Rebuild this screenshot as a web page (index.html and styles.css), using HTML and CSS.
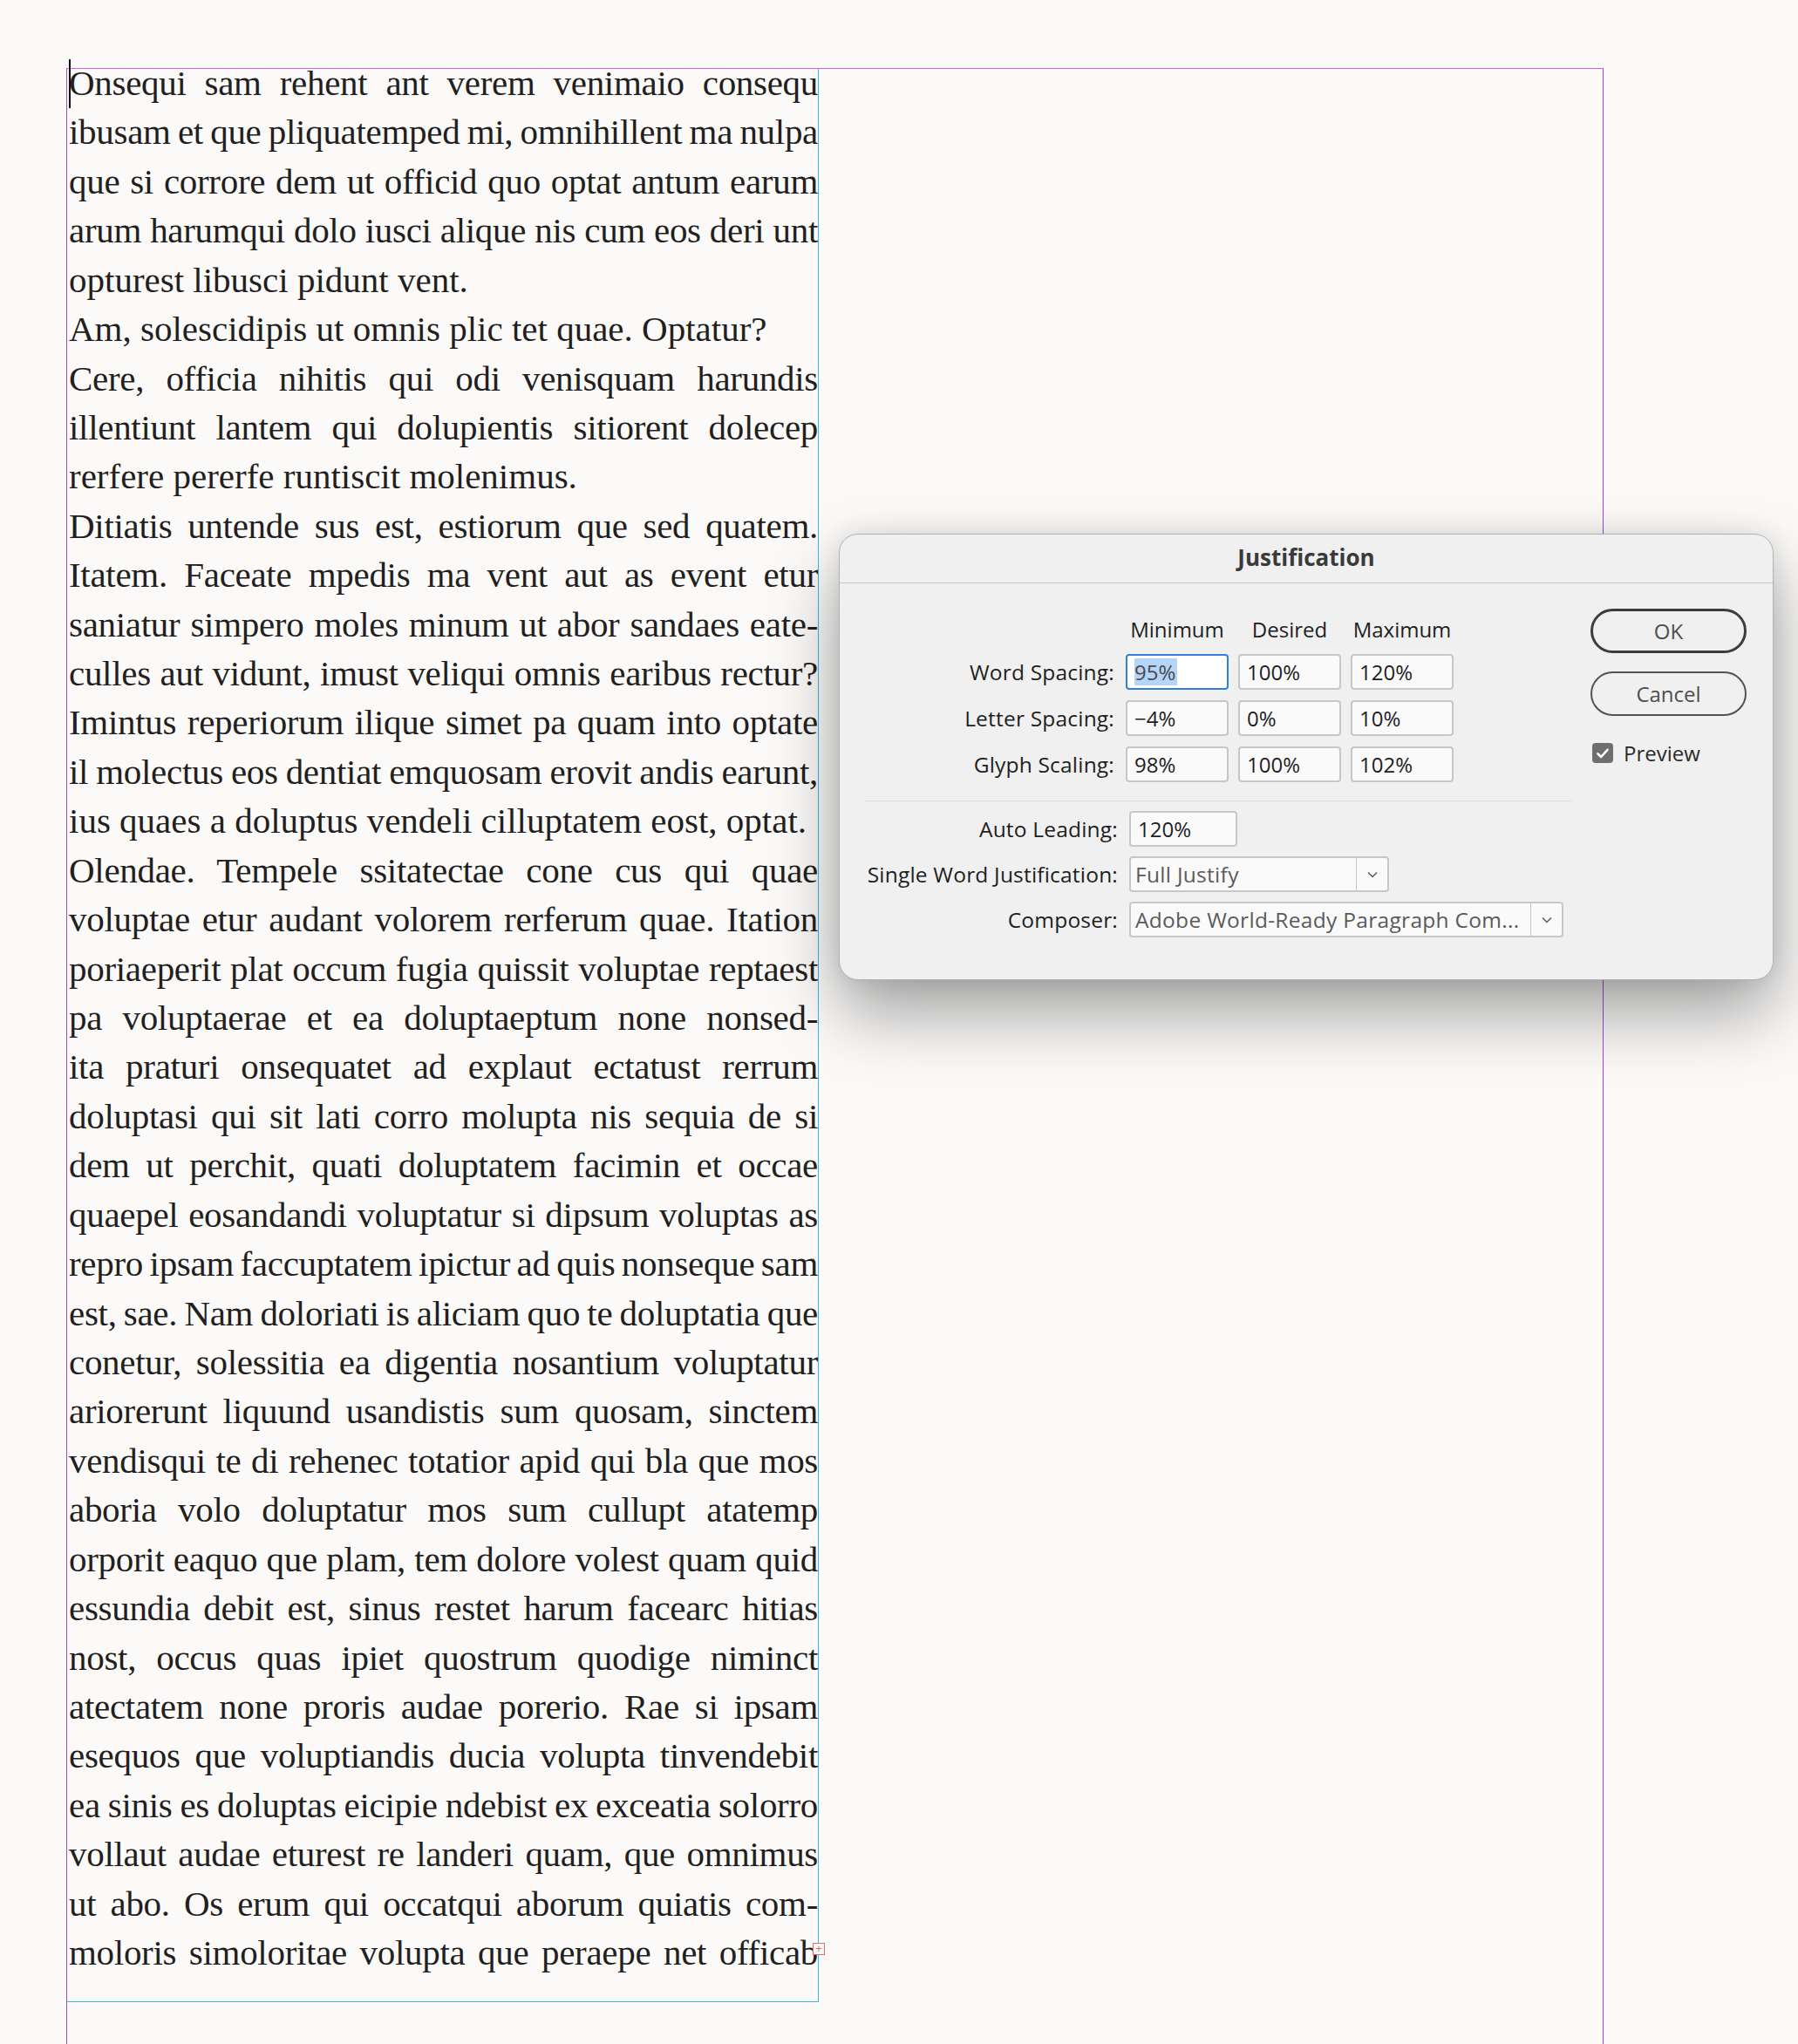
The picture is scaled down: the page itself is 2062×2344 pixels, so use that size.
FILE: index.html
```html
<!DOCTYPE html>
<html lang="en">
<head>
<meta charset="UTF-8" />
<meta name="viewport" content="width=device-width, initial-scale=1" />
<title>Justification</title>
<link rel="stylesheet" href="styles.css">
</head>
<body>
<main class="spread" aria-label="Document page">
  <div class="margins">
    <div class="text-frame">
      <span class="caret"></span>
      <div class="story">
        <div class="ln">Onsequi sam rehent ant verem venimaio consequ</div>
        <div class="ln">ibusam et que pliquatemped mi, omnihillent ma nulpa</div>
        <div class="ln">que si corrore dem ut officid quo optat antum earum</div>
        <div class="ln">arum harumqui dolo iusci alique nis cum eos deri unt</div>
        <div class="ln end">opturest libusci pidunt vent.</div>
        <div class="ln end">Am, solescidipis ut omnis plic tet quae. Optatur?</div>
        <div class="ln">Cere, officia nihitis qui odi venisquam harundis</div>
        <div class="ln">illentiunt lantem qui dolupientis sitiorent dolecep</div>
        <div class="ln end">rerfere pererfe runtiscit molenimus.</div>
        <div class="ln">Ditiatis untende sus est, estiorum que sed quatem.</div>
        <div class="ln">Itatem. Faceate mpedis ma vent aut as event etur</div>
        <div class="ln">saniatur simpero moles minum ut abor sandaes eate-</div>
        <div class="ln">culles aut vidunt, imust veliqui omnis earibus rectur?</div>
        <div class="ln">Imintus reperiorum ilique simet pa quam into optate</div>
        <div class="ln">il molectus eos dentiat emquosam erovit andis earunt,</div>
        <div class="ln end">ius quaes a doluptus vendeli cilluptatem eost, optat.</div>
        <div class="ln">Olendae. Tempele ssitatectae cone cus qui quae</div>
        <div class="ln">voluptae etur audant volorem rerferum quae. Itation</div>
        <div class="ln">poriaeperit plat occum fugia quissit voluptae reptaest</div>
        <div class="ln">pa voluptaerae et ea doluptaeptum none nonsed-</div>
        <div class="ln">ita praturi onsequatet ad explaut ectatust rerrum</div>
        <div class="ln">doluptasi qui sit lati corro molupta nis sequia de si</div>
        <div class="ln">dem ut perchit, quati doluptatem facimin et occae</div>
        <div class="ln">quaepel eosandandi voluptatur si dipsum voluptas as</div>
        <div class="ln">repro ipsam faccuptatem ipictur ad quis nonseque sam</div>
        <div class="ln">est, sae. Nam doloriati is aliciam quo te doluptatia que</div>
        <div class="ln">conetur, solessitia ea digentia nosantium voluptatur</div>
        <div class="ln">ariorerunt liquund usandistis sum quosam, sinctem</div>
        <div class="ln">vendisqui te di rehenec totatior apid qui bla que mos</div>
        <div class="ln">aboria volo doluptatur mos sum cullupt atatemp</div>
        <div class="ln">orporit eaquo que plam, tem dolore volest quam quid</div>
        <div class="ln">essundia debit est, sinus restet harum facearc hitias</div>
        <div class="ln">nost, occus quas ipiet quostrum quodige niminct</div>
        <div class="ln">atectatem none proris audae porerio. Rae si ipsam</div>
        <div class="ln">esequos que voluptiandis ducia volupta tinvendebit</div>
        <div class="ln">ea sinis es doluptas eicipie ndebist ex exceatia solorro</div>
        <div class="ln">vollaut audae eturest re landeri quam, que omnimus</div>
        <div class="ln">ut abo. Os erum qui occatqui aborum quiatis com-</div>
        <div class="ln">moloris simoloritae volupta que peraepe net officab</div>
      </div>
      <span class="overset">+</span>
    </div>
  </div>
</main>

<div class="dialog" role="dialog" aria-label="Justification">
  <div class="dialog-title">Justification</div>
  <div class="dialog-body">
    <div class="settings">
      <div class="spacing-grid">
        <span></span>
        <span class="col-head">Minimum</span>
        <span class="col-head">Desired</span>
        <span class="col-head">Maximum</span>

        <span class="lbl">Word Spacing:</span>
        <span class="field focused"><span class="sel">95%</span></span>
        <span class="field">100%</span>
        <span class="field">120%</span>

        <span class="lbl">Letter Spacing:</span>
        <span class="field">&minus;4%</span>
        <span class="field">0%</span>
        <span class="field">10%</span>

        <span class="lbl">Glyph Scaling:</span>
        <span class="field">98%</span>
        <span class="field">100%</span>
        <span class="field">102%</span>
      </div>

      <div class="rule"></div>

      <div class="options-grid">
        <span class="lbl">Auto Leading:</span>
        <span class="field leading">120%</span>

        <span class="lbl">Single Word Justification:</span>
        <span class="dropdown single">
          <span class="dd-value">Full Justify</span>
          <span class="dd-arrow"><svg width="12" height="8" viewBox="0 0 12 8"><path d="M1 1.5 L6 6.5 L11 1.5" fill="none" stroke="#555" stroke-width="1.4"/></svg></span>
        </span>

        <span class="lbl">Composer:</span>
        <span class="dropdown composer">
          <span class="dd-value">Adobe World-Ready Paragraph Com...</span>
          <span class="dd-arrow"><svg width="12" height="8" viewBox="0 0 12 8"><path d="M1 1.5 L6 6.5 L11 1.5" fill="none" stroke="#555" stroke-width="1.4"/></svg></span>
        </span>
      </div>
    </div>

    <div class="actions">
      <button class="btn btn-default">OK</button>
      <button class="btn">Cancel</button>
      <label class="check">
        <span class="box"><svg width="16" height="14" viewBox="0 0 16 14"><path d="M2.5 7.5 L6.2 11 L13.5 2.8" fill="none" stroke="#fff" stroke-width="2.6" stroke-linecap="round" stroke-linejoin="round"/></svg></span>
        Preview
      </label>
    </div>
  </div>
</div>
</body>
</html>
```

FILE: styles.css
```css
html, body {
  margin: 0;
  padding: 0;
}
body {
  width: 2062px;
  height: 2344px;
  overflow: hidden;
  background: #fbfaf9;
  position: relative;
}

/* document page with guides */
.spread {
  padding: 78px 0 0 76px;
}
.margins {
  width: 1761px;
  height: 2266px;
  border: 1px solid #a448d2;
  border-top-color: #d860e6;
  border-bottom: none;
}
.text-frame {
  display: flow-root;
  position: relative;
  width: 861px;
  height: 2216px;
  border-right: 1px solid #3cb6e2;
  border-bottom: 1px solid #3cb6e2;
}
.story {
  margin-top: -12px;
  padding-left: 2px;
  overflow: hidden;
  font-family: "Liberation Serif", "Times New Roman", serif;
  font-size: 41px;
  line-height: 56.42px;
  color: #231f20;
}
/* tight minimums, justification spreads the rest */
.ln {
  white-space: nowrap;
  text-align: justify;
  text-align-last: justify;
  letter-spacing: -0.3px;
  word-spacing: -3px;
}
.ln.end {
  text-align-last: left;
  letter-spacing: 0;
  word-spacing: 0;
}
.caret {
  position: absolute;
  left: 2px;
  top: -11px;
  width: 2px;
  height: 56px;
  background: #111;
}
.overset {
  position: absolute;
  right: -8px;
  bottom: 53px;
  width: 12px;
  height: 12px;
  border: 1px solid #e06a72;
  background: #fbfaf9;
  color: #e06a72;
  font: 13px/12px "Liberation Sans", sans-serif;
  text-align: center;
}

/* Justification dialog */
.dialog {
  position: absolute;
  left: 962px;
  top: 612px;
  width: 1072px;
  height: 512px;
  box-sizing: border-box;
  background: #f0f0f0;
  border: 1px solid #b2b2b2;
  border-radius: 22px;
  box-shadow: 0 38px 80px rgba(0,0,0,0.36), 0 0 28px rgba(0,0,0,0.09);
  font-family: "Open Sans", "Noto Sans", sans-serif;
  color: #1e1e1e;
}
.dialog-title {
  height: 55px;
  line-height: 52px;
  text-align: center;
  font-size: 26px;
  font-weight: 700;
  color: #3a3a3a;
  border-bottom: 1px solid #c9c9c9;
}
.dialog-body {
  display: flex;
  padding: 29px 30px 0 29px;
}
.settings {
  width: 832px;
  padding-top: 6px;
}
.spacing-grid {
  display: grid;
  grid-template-columns: 288px 118px 118px 118px;
  grid-template-rows: 34px 41px 41px 41px;
  column-gap: 11px;
  row-gap: 12px;
  align-items: center;
}
.col-head {
  font-size: 24px;
  text-align: center;
  color: #1e1e1e;
}
.lbl {
  font-size: 24.5px;
  letter-spacing: 0.2px;
  text-align: right;
  padding-right: 2px;
  white-space: nowrap;
}
.field {
  box-sizing: border-box;
  height: 41px;
  padding: 0 8px;
  line-height: 37px;
  font-size: 24px;
  background: #fafafa;
  border: 2px solid #c7c7c7;
  border-radius: 4px;
  color: #1e1e1e;
}
.field.focused {
  background: #fff;
  border-color: #2f7fdc;
}
.sel {
  display: inline-block;
  background: #b5d5f8;
  color: #4a4a4a;
  line-height: 31px;
  padding-right: 2px;
}
.rule {
  width: 811px;
  height: 1px;
  background: #dddddd;
  margin: 21px 0 11px;
}
.options-grid {
  display: grid;
  grid-template-columns: 303px auto;
  grid-auto-rows: 41px;
  row-gap: 11px;
  align-items: center;
  justify-items: start;
}
.options-grid .lbl {
  justify-self: stretch;
  padding-right: 13px;
}
.field.leading {
  width: 124px;
}
.dropdown {
  box-sizing: border-box;
  display: flex;
  height: 41px;
  background: #fafafa;
  border: 2px solid #c7c7c7;
  border-radius: 4px;
  font-size: 24.5px;
  letter-spacing: 0.3px;
  color: #5a5a5a;
}
.dropdown.single {
  width: 298px;
}
.dropdown.composer {
  width: 498px;
}
.dd-value {
  flex: 1;
  padding-left: 5px;
  line-height: 37px;
  white-space: nowrap;
  overflow: hidden;
}
.dd-arrow {
  width: 35px;
  border-left: 1.5px solid #c7c7c7;
  display: flex;
  align-items: center;
  justify-content: center;
}

.actions {
  width: 179px;
  margin-left: auto;
  display: flex;
  flex-direction: column;
}
.btn {
  height: 51px;
  margin-bottom: 21px;
  border: 2px solid #525252;
  border-radius: 26px;
  background: transparent;
  font-family: "Open Sans", "Noto Sans", sans-serif;
  font-size: 24px;
  color: #4e4e4e;
  cursor: pointer;
}
.btn-default {
  border: 3.5px solid #3c3c3c;
}
.check {
  display: flex;
  align-items: center;
  gap: 12px;
  margin-top: 5px;
  padding-left: 2px;
  font-size: 24px;
  color: #2a2a2a;
}
.box {
  width: 24px;
  height: 23px;
  border-radius: 4px;
  background: #6f6f6f;
  display: flex;
  align-items: center;
  justify-content: center;
}
```
